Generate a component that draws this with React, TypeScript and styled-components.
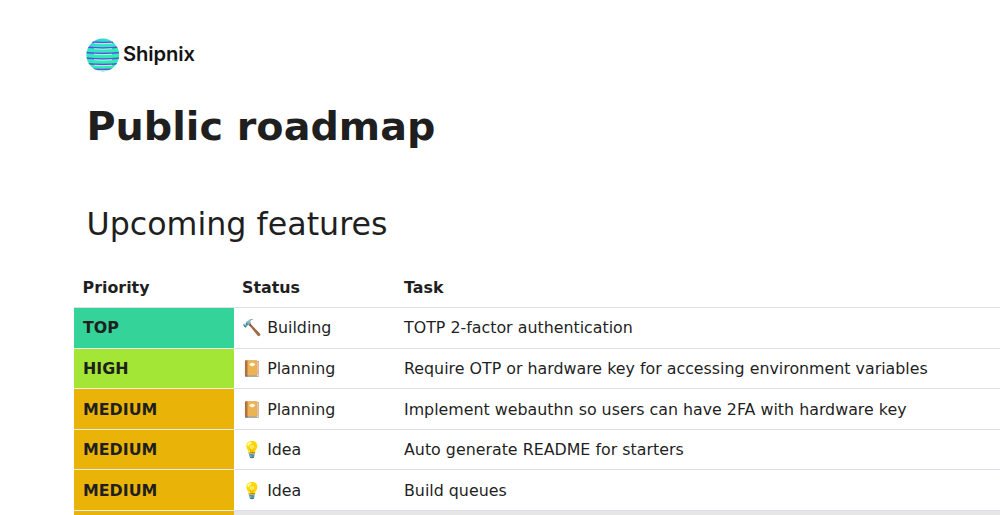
import React from 'react';
import styled, { createGlobalStyle } from 'styled-components';

const Global = createGlobalStyle`
  html, body { margin: 0; padding: 0; background: #fff; overflow: hidden; height: 515px; }
  body { font-family: "DejaVu Sans", sans-serif; color: #1f1f1f; }
`;

const Page = styled.main`
  width: 1000px;
  height: 515px;
  overflow: hidden;
  padding: 38px 0 0 74px;
  box-sizing: border-box;
`;

const Brand = styled.div`
  display: flex;
  align-items: center;
  gap: 3px;
  margin-left: 12px;
  height: 34px;
`;

const BrandName = styled.span`
  font-family: "Inter", sans-serif;
  font-size: 20.2px;
  line-height: 32px;
  margin-bottom: 2px;
  font-weight: 600;
  letter-spacing: -0.1px;
  color: #141414;
`;

const Title = styled.h1`
  margin: 31px 0 0 12.5px;
  font-size: 39.7px;
  line-height: 47px;
  font-weight: 700;
  color: #1f1f1f;
`;

const Subtitle = styled.h2`
  margin: 56px 0 0 12.5px;
  font-size: 31.7px;
  line-height: 37px;
  font-weight: 400;
  color: #1f1f1f;
`;

const Table = styled.table`
  margin-top: 24.6px;
  width: 926px;
  border-collapse: collapse;
  table-layout: fixed;
  font-size: 15.85px;
`;

const Head = styled.th<{ $w: number }>`
  width: ${p => p.$w}px;
  height: 40px;
  padding: 1px 8px 0;
  text-align: left;
  font-weight: 700;
  font-size: 15.85px;
  color: #1f1f1f;
  box-sizing: border-box;
  border-bottom: 1px solid #dfdfe6;

  &:first-child {
    padding-left: 8.6px;
  }
`;

const Row = styled.tr`
  height: 40.6px;
`;

const Cell = styled.td<{ $shade?: boolean }>`
  padding: 0 8px;
  border-bottom: 1px solid #dfdfe6;
  color: #1f1f1f;
  white-space: nowrap;
  background: ${p => (p.$shade ? '#e6e6e6' : 'transparent')};
`;

const PriorityCell = styled(Cell)<{ $bg: string }>`
  background: ${p => p.$bg};
  font-weight: 700;
  padding-left: 9px;
  border-bottom-color: #eeeeee;
`;

const Emoji = styled.span`
  font-family: "Noto Color Emoji", sans-serif;
  margin-right: 5.4px;
`;

const Logo = () => (
  <svg width="34" height="34" viewBox="0 0 34 34" aria-hidden="true">
    <defs>
      <clipPath id="ball"><circle cx="16.8" cy="17" r="16.4" /></clipPath>
      <linearGradient id="g" x1="0" y1="0" x2="0.6" y2="1">
        <stop offset="0" stopColor="#3aa8ee" />
        <stop offset="0.3" stopColor="#2be8c4" />
        <stop offset="1" stopColor="#2ff0a8" />
      </linearGradient>
    </defs>
    <g clipPath="url(#ball)">
      <rect width="34" height="34" fill="url(#g)" />
      {[3.5, 9, 14.5, 20, 25.5, 30.5].map(y => (
        <g key={y}>
          <path d={`M0 ${y}q17 2 34 0`} stroke="#6a45e8" strokeWidth="1.5" fill="none" />
          <path d={`M8 ${y + 1.7}q9 1 18 0`} stroke="#dcf8f4" strokeWidth="0.8" fill="none" />
        </g>
      ))}
    </g>
  </svg>
);

const colors = { TOP: '#34d399', HIGH: '#a3e635', MEDIUM: '#eab308' } as const;

const rows: { p: keyof typeof colors; e: string; s: string; t: string }[] = [
  { p: 'TOP', e: '🔨', s: 'Building', t: 'TOTP 2-factor authentication' },
  { p: 'HIGH', e: '📔', s: 'Planning', t: 'Require OTP or hardware key for accessing environment variables' },
  { p: 'MEDIUM', e: '📔', s: 'Planning', t: 'Implement webauthn so users can have 2FA with hardware key' },
  { p: 'MEDIUM', e: '💡', s: 'Idea', t: 'Auto generate README for starters' },
  { p: 'MEDIUM', e: '💡', s: 'Idea', t: 'Build queues' },
];

export default function App() {
  return (
    <Page>
      <Global />
      <Brand>
        <Logo />
        <BrandName>Shipnix</BrandName>
      </Brand>
      <Title>Public roadmap</Title>
      <Subtitle>Upcoming features</Subtitle>
      <Table>
        <thead>
          <tr>
            <Head $w={160}>Priority</Head>
            <Head $w={162}>Status</Head>
            <Head $w={604}>Task</Head>
          </tr>
        </thead>
        <tbody>
          {rows.map((r, i) => (
            <Row key={i}>
              <PriorityCell $bg={colors[r.p]}>{r.p}</PriorityCell>
              <Cell><Emoji>{r.e}</Emoji>{r.s}</Cell>
              <Cell>{r.t}</Cell>
            </Row>
          ))}
          <Row>
            <PriorityCell $bg={colors.MEDIUM} />
            <Cell $shade />
            <Cell $shade />
          </Row>
        </tbody>
      </Table>
    </Page>
  );
}
